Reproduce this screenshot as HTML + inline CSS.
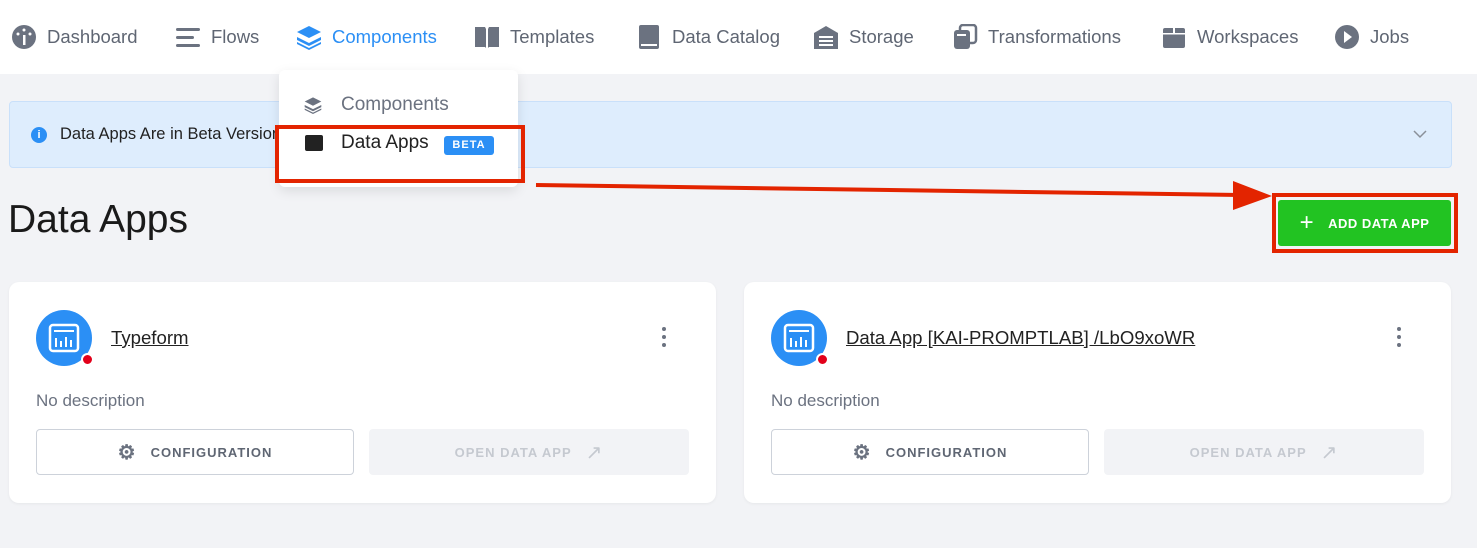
<!DOCTYPE html>
<html><head><style>
*{box-sizing:border-box;margin:0;padding:0}
body{width:1477px;height:548px;background:#f2f3f6;font-family:"Liberation Sans",sans-serif;position:relative;overflow:hidden}
.hdr{position:absolute;left:0;top:0;width:1477px;height:74px;background:#fff}
.nav{position:absolute;top:24px;font-size:18.5px;color:#5f6673;display:flex;align-items:center;gap:10px;white-space:nowrap}
.nav svg{width:26px;height:26px}
.abs{position:absolute}
.card{position:absolute;top:282px;width:707px;height:221px;background:#fff;border-radius:10px;box-shadow:0 1px 3px rgba(0,0,0,.05)}
.ic{position:absolute;left:27px;top:28px;width:56px;height:56px;border-radius:50%;background:#2b8ff5}
.dot{position:absolute;left:72px;top:71px;width:13px;height:13px;border-radius:50%;background:#e2001a;border:2px solid #fff}
.ttl{position:absolute;left:102px;top:45px;font-size:18.6px;color:#222;text-decoration:underline}
.keb{position:absolute;right:50px;top:45px;width:4px}
.keb i{display:block;width:4px;height:4px;border-radius:50%;background:#6b7280;margin-bottom:4px}
.desc{position:absolute;left:27px;top:109px;font-size:17px;color:#6b7280}
.b1{position:absolute;left:27px;top:147px;width:318px;height:46px;border:1px solid #cdd2da;border-radius:4px;font-size:13px;letter-spacing:1px;color:#5f6673;font-weight:bold;display:flex;align-items:center;justify-content:center;gap:14px}
.b2{position:absolute;left:360px;top:147px;width:320px;height:46px;background:#f2f3f6;border-radius:4px;font-size:13px;letter-spacing:1px;color:#c5c9d0;font-weight:bold;display:flex;align-items:center;justify-content:center;gap:14px}
</style></head><body>
<div class="hdr"></div>
<div class="nav" style="left:11px"><svg viewBox="0 0 26 26"><circle cx="13" cy="13" r="12" fill="#6b7280"/><rect x="12" y="11" width="2.5" height="10" fill="#fff"/><circle cx="7" cy="10" r="1.5" fill="#fff"/><circle cx="13" cy="6" r="1.5" fill="#fff"/><circle cx="19" cy="10" r="1.5" fill="#fff"/></svg>Dashboard</div>
<div class="nav" style="left:175px"><svg viewBox="0 0 26 26"><rect x="1" y="4" width="24" height="3" rx="1.5" fill="#6b7280"/><rect x="1" y="12" width="18" height="3" rx="1.5" fill="#6b7280"/><rect x="1" y="20" width="24" height="3" rx="1.5" fill="#6b7280"/></svg>Flows</div>
<div class="nav" style="left:296px;color:#2b8ff5"><svg viewBox="0 0 26 26"><path d="M13 2L25 8 13 14 1 8z" fill="#2b8ff5"/><path d="M1 13l12 6 12-6v3L13 22 1 16z" fill="#2b8ff5"/><path d="M1 18l12 6 12-6v2L13 26 1 20z" fill="#2b8ff5"/></svg>Components</div>
<div class="nav" style="left:474px"><svg viewBox="0 0 26 26"><path d="M1 3h10l1 2v19l-1-1H1z M25 3H15l-1 2v19l1-1h10z" fill="#6b7280"/></svg>Templates</div>
<div class="nav" style="left:636px"><svg viewBox="0 0 26 26"><rect x="3" y="1" width="20" height="24" rx="2" fill="#6b7280"/><rect x="5" y="20" width="16" height="2" fill="#fff"/></svg>Data Catalog</div>
<div class="nav" style="left:813px"><svg viewBox="0 0 26 26"><path d="M1 9L13 2 25 9v16H1z" fill="#6b7280"/><rect x="6" y="12" width="14" height="2" fill="#fff"/><rect x="6" y="16" width="14" height="2" fill="#fff"/><rect x="6" y="20" width="14" height="2" fill="#fff"/></svg>Storage</div>
<div class="nav" style="left:952px"><svg viewBox="0 0 26 26"><rect x="8" y="1" width="16" height="18" rx="3" fill="none" stroke="#6b7280" stroke-width="2.5"/><rect x="2" y="6" width="16" height="19" rx="3" fill="#6b7280"/><rect x="5" y="10" width="9" height="2" fill="#fff"/></svg>Transformations</div>
<div class="nav" style="left:1161px"><svg viewBox="0 0 26 26"><rect x="2" y="4" width="22" height="20" rx="2" fill="#6b7280"/><rect x="12" y="3" width="2" height="7" fill="#fff"/><rect x="2" y="9" width="22" height="1.5" fill="#fff"/></svg>Workspaces</div>
<div class="nav" style="left:1334px"><svg viewBox="0 0 26 26"><circle cx="13" cy="13" r="12" fill="#6b7280"/><path d="M10 7l8 6-8 6z" fill="#fff"/></svg>Jobs</div>

<div class="abs" style="left:9px;top:101px;width:1443px;height:67px;background:#deedfd;border:1px solid #c9e0fa;border-radius:4px"></div>
<div class="abs" style="left:31px;top:127px;width:16px;height:16px;border-radius:50%;background:#2b8ff5;color:#fff;font-size:11px;font-weight:bold;text-align:center;line-height:16px">i</div>
<div class="abs" style="left:60px;top:125px;font-size:16.5px;color:#222">Data Apps Are in Beta Version</div>
<svg class="abs" style="left:1412px;top:128px" width="16" height="12" viewBox="0 0 16 12"><path d="M2 3l6 6 6-6" fill="none" stroke="#8a9099" stroke-width="1.5"/></svg>

<div class="abs" style="left:279px;top:70px;width:239px;height:117px;background:#fff;border-radius:6px;box-shadow:0 4px 12px rgba(0,0,0,.1)"></div>
<svg class="abs" style="left:304px;top:96px" width="18" height="18" viewBox="0 0 26 26"><path d="M13 2L25 8 13 14 1 8z" fill="#6b7280"/><path d="M1 13l12 6 12-6v3L13 22 1 16z" fill="#6b7280"/><path d="M1 18l12 6 12-6v2L13 26 1 20z" fill="#6b7280"/></svg>
<div class="abs" style="left:341px;top:94px;font-size:19px;color:#6b7280">Components</div>
<div class="abs" style="left:305px;top:135px;width:18px;height:16px;background:#222;border-radius:2px;border-top:3px solid #222"></div>
<div class="abs" style="left:341px;top:132px;font-size:19px;color:#222">Data Apps</div>
<div class="abs" style="left:444px;top:136px;width:50px;height:19px;background:#2b8ff5;border-radius:3px;color:#fff;font-size:11px;font-weight:bold;letter-spacing:1px;text-align:center;line-height:19px">BETA</div>
<div class="abs" style="left:275px;top:125px;width:250px;height:58px;border:4px solid #e32400"></div>

<svg class="abs" style="left:0;top:0" width="1477" height="548"><path d="M536 185L1240 195" stroke="#e32400" stroke-width="4"/><path d="M1233 181L1272 196 1233 210z" fill="#e32400"/></svg>

<div class="abs" style="left:8px;top:198px;font-size:39px;color:#1a1a1a">Data Apps</div>
<div class="abs" style="left:1272px;top:193px;width:186px;height:60px;border:4px solid #e32400"></div>
<div class="abs" style="left:1278px;top:200px;width:173px;height:46px;background:#22c322;border-radius:3px;color:#fff;font-size:13px;font-weight:bold;letter-spacing:.5px;display:flex;align-items:center;justify-content:center;gap:14px"><span style="font-size:24px;font-weight:normal">+</span>ADD DATA APP</div>

<div class="card" style="left:9px">
<div class="ic"><svg width="56" height="56" viewBox="0 0 56 56"><rect x="14" y="15" width="28" height="26" rx="3" fill="none" stroke="#fff" stroke-width="2.5"/><rect x="18" y="20" width="20" height="2" fill="#fff"/><rect x="19" y="28" width="2" height="9" fill="#fff"/><rect x="24" y="31" width="2" height="6" fill="#fff"/><rect x="29" y="27" width="2" height="10" fill="#fff"/><rect x="34" y="30" width="2" height="7" fill="#fff"/></svg></div><div class="dot"></div>
<div class="ttl">Typeform</div><div class="keb"><i></i><i></i><i></i></div>
<div class="desc">No description</div>
<div class="b1"><span style="font-size:20px;color:#6b7280">⚙</span>CONFIGURATION</div>
<div class="b2">OPEN DATA APP<span style="font-size:20px;font-weight:normal">↗</span></div>
</div>
<div class="card" style="left:744px">
<div class="ic"><svg width="56" height="56" viewBox="0 0 56 56"><rect x="14" y="15" width="28" height="26" rx="3" fill="none" stroke="#fff" stroke-width="2.5"/><rect x="18" y="20" width="20" height="2" fill="#fff"/><rect x="19" y="28" width="2" height="9" fill="#fff"/><rect x="24" y="31" width="2" height="6" fill="#fff"/><rect x="29" y="27" width="2" height="10" fill="#fff"/><rect x="34" y="30" width="2" height="7" fill="#fff"/></svg></div><div class="dot"></div>
<div class="ttl">Data App [KAI-PROMPTLAB] /LbO9xoWR</div><div class="keb"><i></i><i></i><i></i></div>
<div class="desc">No description</div>
<div class="b1"><span style="font-size:20px;color:#6b7280">⚙</span>CONFIGURATION</div>
<div class="b2">OPEN DATA APP<span style="font-size:20px;font-weight:normal">↗</span></div>
</div>
</body></html>
